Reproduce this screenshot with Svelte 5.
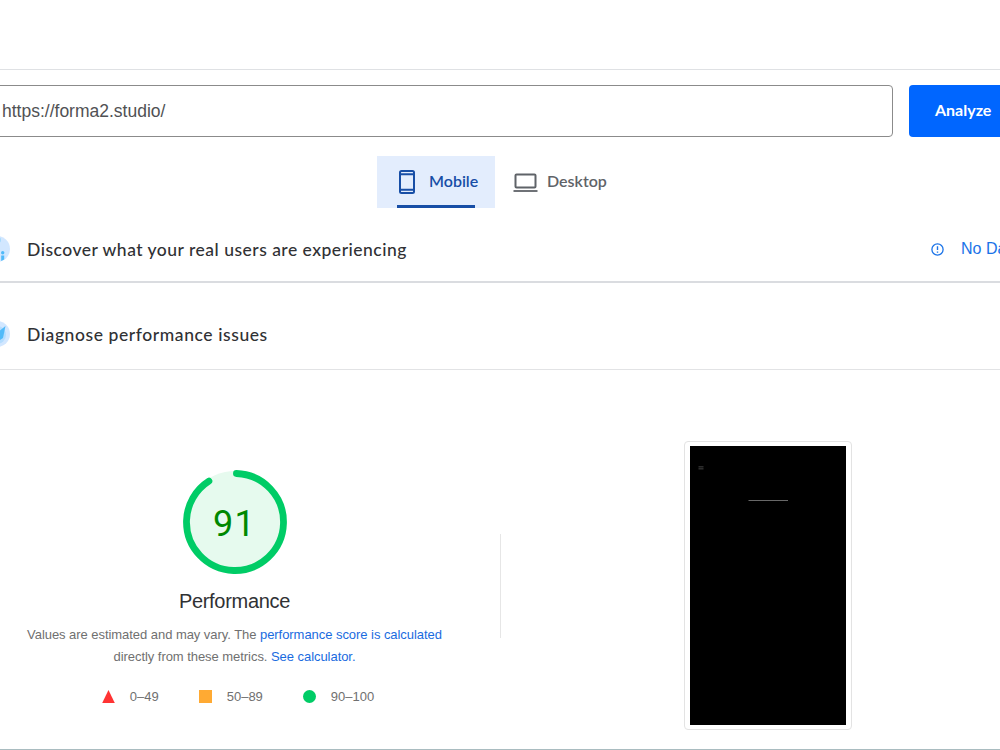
<script lang="ts">
  let url = $state('https://forma2.studio/');
  let device: 'mobile' | 'desktop' = $state('mobile');

  const score = 91;
  const radius = 48.5;
  const length = 2 * Math.PI * radius;
  // leave room for the rounded caps
  const arc = (score / 100) * length - 2;
</script>

<div class="page">
  <header class="topbar"></header>

  <form class="search" onsubmit={(e) => e.preventDefault()}>
    <input class="url" type="text" aria-label="URL" bind:value={url} />
    <button class="analyze" type="submit"><span>Analyze</span></button>
  </form>

  <nav class="tabs">
    <button class="tab mobile" class:active={device === 'mobile'} onclick={() => (device = 'mobile')}>
      <svg width="16" height="24" viewBox="0 0 16 24" fill="none" stroke="currentColor" stroke-width="2">
        <rect x="1" y="1" width="14" height="22" rx="1.5" />
        <path d="M1 4.3h14M1 19.7h14" />
      </svg>
      <span>Mobile</span>
    </button>
    <button class="tab desktop" class:active={device === 'desktop'} onclick={() => (device = 'desktop')}>
      <svg width="25" height="19" viewBox="0 0 25 19" fill="none" stroke="currentColor" stroke-width="2">
        <rect x="2.5" y="1.5" width="20" height="13" rx="1" />
        <path d="M.5 18h24" stroke-width="1.8" />
      </svg>
      <span>Desktop</span>
    </button>
  </nav>

  <section class="row field">
    <svg class="badge" width="26" height="26" viewBox="0 0 26 26">
      <circle cx="13" cy="13" r="13" fill="#d2e7ff" />
      <circle cx="14" cy="4" r="3" fill="#a5dafc" />
      <path d="M4 12h5v10H4z" fill="#50baf9" />
      <circle cx="18.7" cy="16.8" r="1.7" fill="#50baf9" />
      <path d="M17.2 19.5h3v4l-3 1.6z" fill="#50baf9" />
    </svg>
    <h2 class="users">Discover what your real users are experiencing</h2>
    <div class="status">
      <svg width="13" height="13" viewBox="0 0 13 13" fill="none" stroke="currentColor">
        <circle cx="6.5" cy="6.5" r="5.6" stroke-width="1.3" />
        <path d="M6.5 3.3v3.8M6.5 8.4v1.4" stroke-width="1.4" />
      </svg>
      <span>No Data</span>
    </div>
  </section>

  <section class="row lab">
    <svg class="badge" width="26" height="26" viewBox="0 0 26 26">
      <circle cx="13" cy="13" r="13" fill="#d2e7ff" />
      <circle cx="13" cy="14" r="9" fill="#b4ddff" />
      <path d="M21.5 5L19 17l-6 4-4-6z" fill="#50baf9" />
    </svg>
    <h2 class="issues">Diagnose performance issues</h2>
  </section>

  <main class="report">
    <div class="summary">
      <div class="gauge">
        <svg width="104" height="104" viewBox="0 0 104 104">
          <circle cx="52" cy="52" r="51" fill="#e6faee" />
          <circle
            cx="52"
            cy="52"
            r={radius}
            fill="none"
            stroke="#0c6"
            stroke-width="6.8"
            stroke-linecap="round"
            stroke-dasharray="{arc} {length}"
            transform="rotate(-88.3 52 52)"
          />
        </svg>
        <span class="score">{score}</span>
      </div>
      <h3>Performance</h3>
      <p>
        Values are estimated and may vary. The <a href="#score">performance score is calculated</a><br />
        directly from these metrics. <a href="#calc">See calculator.</a>
      </p>
      <div class="scale">
        <span class="range">
          <svg width="13" height="13" viewBox="0 0 13 13"><path d="M6.5 0L12.8 13H.2z" fill="#f33" /></svg>
          0–49
        </span>
        <span class="range">
          <svg width="13" height="13" viewBox="0 0 13 13"><rect width="13" height="13" fill="#fa3" /></svg>
          50–89
        </span>
        <span class="range">
          <svg width="13" height="13" viewBox="0 0 13 13"><circle cx="6.5" cy="6.5" r="6.5" fill="#0c6" /></svg>
          90–100
        </span>
      </div>
    </div>
    <div class="divider"></div>
    <div class="preview">
      <div class="frame">
        <svg width="156" height="279" viewBox="0 0 156 279">
          <rect width="156" height="279" fill="#000" />
          <path d="M8.5 20.5h5M8.5 22.5h5" stroke="#2c2c2c" />
          <path d="M8.5 21.5h5M8.5 23.5h5" stroke="#181818" />
          <path d="M58.5 54.5h39.5" stroke="#686868" />
        </svg>
      </div>
    </div>
  </main>
</div>

<style>
  :global(body) {
    margin: 0;
    overflow: hidden;
    background: #fff;
  }

  .page {
    display: flex;
    flex-direction: column;
    box-sizing: border-box;
    width: 1000px;
    height: 750px;
    overflow: hidden;
    border-bottom: 1px solid #a9bcc0;
    font-family: "Liberation Sans", Arial, sans-serif;
    color: #303134;
  }

  button {
    border: 0;
    background: none;
    font-family: Lato, sans-serif;
    white-space: nowrap;
  }

  button span {
    padding-bottom: 3px;
  }

  svg {
    display: block;
    flex: none;
  }

  .topbar {
    flex: none;
    box-sizing: border-box;
    height: 70px;
    border-bottom: 1px solid #dfe1e4;
  }

  .search {
    display: flex;
    flex: none;
    gap: 16px;
    height: 52px;
    margin: 15px -60px 0 -20px;
  }

  .url {
    flex: none;
    box-sizing: border-box;
    width: 913px;
    padding: 0 20px 0 21px;
    border: 1px solid #8b8b8b;
    border-radius: 4px;
    color: #505154;
    font: 17.5px "Liberation Sans", Arial, sans-serif;
    outline: none;
  }

  .analyze {
    display: flex;
    flex: 1;
    align-items: center;
    padding: 0 0 0 26px;
    border-radius: 4px;
    background: #0066ff;
    color: #fff;
    font-size: 16px;
    font-weight: 700;
  }

  .tabs {
    display: flex;
    flex: none;
    height: 52px;
    margin: 19px 0 0 377px;
  }

  .tab {
    display: flex;
    align-items: center;
    padding: 0;
    color: #5f6368;
    font-size: 16px;
    font-weight: 600;
  }

  .mobile {
    width: 118px;
    padding-left: 22px;
    gap: 14px;
  }

  .desktop {
    padding-left: 18px;
    gap: 9px;
  }

  .tab.active {
    background:
      linear-gradient(#174ea6, #174ea6) 20px 100% / 78px 3px no-repeat,
      #e3edfd;
    color: #174ea6;
  }

  .row {
    display: flex;
    flex: none;
    align-items: center;
    box-sizing: border-box;
  }

  .field {
    height: 75px;
    padding: 14px 0 5px;
    border-bottom: 2px solid #dadce0;
  }

  .lab {
    height: 87px;
    padding-top: 16px;
    border-bottom: 1px solid #e2e3e5;
  }

  .badge {
    margin-left: -16px;
  }

  h2 {
    margin: 0 0 0 17px;
    font: 500 17.5px Lato, sans-serif;
    white-space: nowrap;
  }

  .users {
    letter-spacing: 0.49px;
  }

  .issues {
    letter-spacing: 0.58px;
  }

  .status {
    display: flex;
    align-items: center;
    width: 69px;
    gap: 17px;
    margin-left: auto;
    color: #1a73e8;
    font-size: 16px;
    white-space: nowrap;
  }

  .report {
    display: flex;
    flex: 1;
  }

  .summary {
    display: flex;
    flex-direction: column;
    align-items: center;
    width: 469px;
    padding-top: 100px;
  }

  .gauge {
    display: grid;
    place-items: center;
  }

  .gauge > * {
    grid-area: 1 / 1;
  }

  .score {
    padding-top: 3px;
    color: #080;
    font: 36px Roboto, sans-serif;
    letter-spacing: 1.2px;
  }

  h3 {
    margin: 15px 0 0;
    font-size: 20px;
    font-weight: 400;
    letter-spacing: -0.3px;
    line-height: 24px;
  }

  p {
    margin: 11px 0 0;
    color: #707070;
    font-size: 13px;
    letter-spacing: -0.05px;
    line-height: 22px;
    text-align: center;
    white-space: nowrap;
  }

  a {
    color: #1a6be0;
    text-decoration: none;
  }

  .scale {
    display: flex;
    gap: 40px;
    margin: 20px 0 0 7px;
    color: #707070;
    font-size: 13px;
    line-height: 17px;
  }

  .range {
    display: flex;
    align-items: center;
    gap: 15px;
  }

  .divider {
    width: 1px;
    height: 104px;
    margin: 164px 0 0 31px;
    background: #e6e6e6;
  }

  .preview {
    padding: 71px 0 0 183px;
  }

  .frame {
    padding: 4px 5px;
    border: 1px solid #e3e3e3;
    border-radius: 4px;
  }
</style>
